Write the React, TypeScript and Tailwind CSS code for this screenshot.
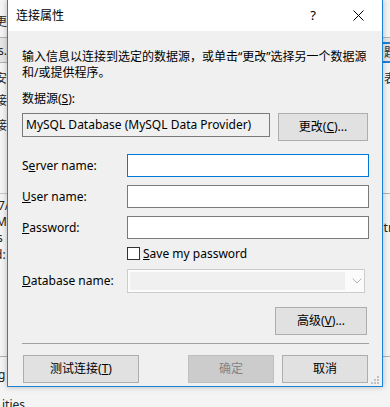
import React from 'react';

const cjk = "font-['Segoe_UI','Noto_Sans','Noto_Sans_CJK_SC',sans-serif]";

const Btn = ({ w, children, disabled }: { w: string; children: React.ReactNode; disabled?: boolean }) => (
    <div
        className={`${w} h-[28px] flex items-center justify-center border text-[12px] ${disabled
            ? 'bg-[#cccccc] border-[#bfbfbf] text-[#838383]'
            : 'bg-[#e1e1e1] border-[#adadad] text-black'
            }`}
    >
        {children}
    </div>
);

const Field = ({ label, k, rest, focused }: { label?: string; k: string; rest: string; focused?: boolean }) => (
    <div className="flex items-center h-[23px]">
        <div className="w-[105px] text-[12px] text-black">
            {label}
            <span className="underline">{k}</span>
            {rest}
        </div>
        <div className={`w-[242px] h-[23px] bg-white border ${focused ? 'border-[#0078d7]' : 'border-[#7a7a7a]'}`} />
    </div>
);

export default function App() {
    return (
        <div className={`relative w-[390px] h-[407px] overflow-hidden bg-[#f4f4f4] ${cjk}`}>
            {/* window behind the dialog */}
            <div className="absolute inset-0 text-[12px] leading-[14px] text-[#222]">
                <div className="absolute left-[-5px] top-[15px]">更</div>
                <div className="absolute left-0 top-[37px] w-full h-px bg-[#b0b0b0]" />
                <div className="absolute left-0 top-[38px] w-full h-[24px] bg-[#e6e6e6]" />
                <div className="absolute left-[-2px] top-[44px]">s.l</div>
                <div className="absolute left-0 top-[62px] w-full h-px bg-[#b0b0b0]" />
                <div className="absolute left-[-5px] top-[72px]">安</div>
                <div className="absolute left-[-5px] top-[94px]">接</div>
                <div className="absolute left-[-5px] top-[119px]">接</div>
                <div className="absolute left-0 top-[193px] w-full h-px bg-[#c8c8c8]" />
                <div className="absolute left-[-2px] top-[199px]">7/</div>
                <div className="absolute left-[-4px] top-[215px]">M</div>
                <div className="absolute left-[-3px] top-[231px]">s</div>
                <div className="absolute left-[-5px] top-[248px]">d:</div>
                <div className="absolute left-0 top-[356px] w-full h-px bg-[#b0b0b0]" />
                <div className="absolute left-[-2px] top-[368px]">g</div>
                <div className="absolute left-[2px] top-[398px]">ities</div>
                <div className="absolute right-0 top-[42px] w-[8px] h-[2px] bg-[#1883d7]" />
                <div className="absolute right-[-6px] top-[46px]">题</div>
                <div className="absolute right-0 top-[61px] w-[8px] h-[2px] bg-[#1883d7]" />
                <div className="absolute right-[-6px] top-[72px]">表</div>
                <div className="absolute right-0 top-[193px] w-[8px] h-px bg-[#b0b0b0]" />
                <div className="absolute right-[-6px] top-[221px]">tri</div>
                <div className="absolute right-0 top-[356px] w-[8px] h-px bg-[#b0b0b0]" />
            </div>

            {/* dialog */}
            <div className="absolute left-[7px] top-0 w-[376px] h-[387px] flex flex-col border-x border-b border-[#1883d7] bg-[#f0f0f0] shadow-[0_0_6px_rgba(0,0,0,0.25)]">
                <div className="h-[31px] bg-white flex items-center pl-[8px] pr-[13px]">
                    <span className="text-[12px] text-black">连接属性</span>
                    <span className="ml-auto mr-[37px] text-[13px] text-black">?</span>
                    <svg width="11" height="11" viewBox="0 0 11 11" className="mr-[5px]">
                        <path d="M0.5 0.5 L10.5 10.5 M10.5 0.5 L0.5 10.5" stroke="#000" strokeWidth="1" />
                    </svg>
                </div>

                <div className="relative flex-1 flex flex-col pl-[14px] pr-[13px] text-[12px] text-black leading-[16px]">
                    <div className="mt-[18px]">
                        输入信息以连接到选定的数据源，或单击“更改”选择另一个数据源
                        <br />
                        和/或提供程序。
                    </div>
                    <div className="mt-[10px]">
                        数据源(<span className="underline">S</span>):
                    </div>
                    <div className="mt-[6px] flex items-start">
                        <div className="w-[248px] h-[24px] border border-[#7a7a7a] bg-[#f0f0f0] flex items-center pl-[3px] whitespace-nowrap overflow-hidden">
                            MySQL Database (MySQL Data Provider)
                        </div>
                        <div className="ml-[8px]">
                            <Btn w="w-[90px]">
                                更改(<span className="underline">C</span>)...
                            </Btn>
                        </div>
                    </div>

                    <div className="mt-[13px]">
                        <Field label="S" k="e" rest="rver name:" focused />
                    </div>
                    <div className="mt-[8px]">
                        <Field k="U" rest="ser name:" />
                    </div>
                    <div className="mt-[8px]">
                        <Field k="P" rest="assword:" />
                    </div>

                    <div className="mt-[6px] h-[17px] flex items-center pl-[105px]">
                        <div className="w-[13px] h-[13px] border border-[#333] bg-white" />
                        <span className="ml-[3px]">
                            <span className="underline">S</span>ave my password
                        </span>
                    </div>

                    <div className="mt-[7px] flex items-center h-[24px]">
                        <div className="w-[105px] text-[#000]">
                            <span className="underline">D</span>atabase name:
                        </div>
                        <div className="w-[238px] h-[24px] border border-[#cccccc] bg-[#fbfbfb] flex items-center pl-[2px]">
                            <div className="w-[215px] h-[18px] bg-[#f0f0f0]" />
                            <svg width="10" height="6" viewBox="0 0 10 6" className="ml-[7px]">
                                <path d="M0.5 0.5 L5 5 L9.5 0.5" fill="none" stroke="#b5b5b5" strokeWidth="1" />
                            </svg>
                        </div>
                    </div>

                    <div className="mt-[14px] flex justify-end pr-[2px]">
                        <Btn w="w-[92px]">
                            高级(<span className="underline">V</span>)...
                        </Btn>
                    </div>

                    <div className="mt-[8px] h-px bg-[#a0a0a0]" />

                    <div className="mt-[11px] flex items-start pl-px pr-px">
                        <Btn w="w-[116px]">
                            测试连接(<span className="underline">T</span>)
                        </Btn>
                        <div className="ml-auto">
                            <Btn w="w-[86px]" disabled>
                                确定
                            </Btn>
                        </div>
                        <div className="ml-[8px]">
                            <Btn w="w-[86px]">取消</Btn>
                        </div>
                    </div>

                    {/* size grip */}
                    <svg width="10" height="10" viewBox="0 0 10 10" className="absolute right-[2px] bottom-[1px]">
                        <rect x="7" y="1" width="2" height="2" fill="#c0c0c0" />
                        <rect x="4" y="4" width="2" height="2" fill="#c0c0c0" />
                        <rect x="7" y="4" width="2" height="2" fill="#c0c0c0" />
                        <rect x="1" y="7" width="2" height="2" fill="#c0c0c0" />
                        <rect x="4" y="7" width="2" height="2" fill="#c0c0c0" />
                        <rect x="7" y="7" width="2" height="2" fill="#c0c0c0" />
                    </svg>
                </div>
            </div>
        </div>
    );
}
